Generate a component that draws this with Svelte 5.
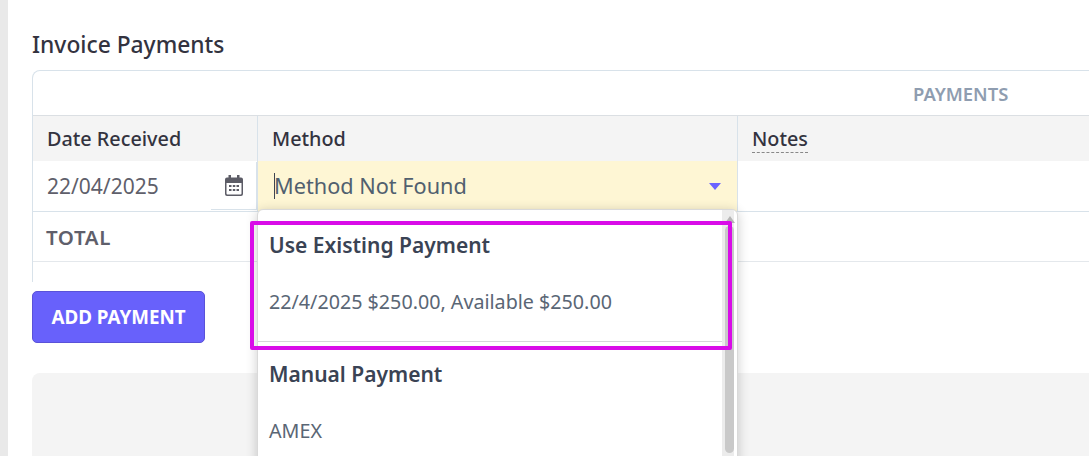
<script>
  let rows = [
    { title: "Use Existing Payment", items: ["22/4/2025 $250.00, Available $250.00"] },
    { title: "Manual Payment", items: ["AMEX"] }
  ];
</script>

<div class="page">
  <div class="rail"></div>
  <main class="content">
    <h2 class="title">Invoice Payments</h2>

    <section class="table_card">
      <div class="group_row">PAYMENTS</div>

      <div class="row head">
        <div class="cell date">Date Received</div>
        <div class="cell method">Method</div>
        <div class="cell notes"><span class="dashed">Notes</span></div>
      </div>

      <div class="row entry">
        <div class="cell date date_input">
          <span>22/04/2025</span>
          <div class="cal_addon">
            <svg width="18" height="21" viewBox="0 0 18 21">
              <path fill="#5c5c66" d="M3.500 0h2.500v2.500h6V0h2.500v2.500H16a2 2 0 0 1 2 2V19a2 2 0 0 1-2 2H2a2 2 0 0 1-2-2V4.500a2 2 0 0 1 2-2h1.500zM1.500 8v10.500a1 1 0 0 0 1 1h13a1 1 0 0 0 1-1V8z"/>
              <path fill="#5c5c66" d="M4 10h2.500v2H4zM7.800 10h2.500v2H7.800zM11.500 10H14v2h-2.500zM4 14h2.500v2H4zM7.800 14h2.500v2H7.800zM11.500 14H14v2h-2.500z"/>
            </svg>
          </div>
        </div>
        <div class="cell method select">
          <span class="caret"></span>
          <span class="select_value">Method Not Found</span>
          <span class="arrow"></span>
        </div>
        <div class="cell notes"></div>
      </div>

      <div class="row total">
        <div class="cell date total_label">TOTAL</div>
      </div>
      <div class="tail"></div>
    </section>

    <button class="add_btn">ADD PAYMENT</button>

    <div class="grey_panel"></div>
  </main>

  <div class="dropdown">
    <div class="menu_list">
      {#each rows as group, i}
        <div class="group {i === 0 ? 'first' : ''}">
          <div class="group_title">{group.title}</div>
          {#each group.items as item}
            <div class="option">{item}</div>
          {/each}
        </div>
      {/each}
    </div>
    <div class="scroll_track">
      <div class="scroll_up"></div>
      <div class="scroll_thumb"></div>
    </div>
  </div>

  <div class="highlight"></div>
</div>

<style>
  :global(body) {
    margin: 0;
    background: #fff;
  }

  .page {
    position: relative;
    display: flex;
    width: 1089px;
    height: 456px;
    overflow: hidden;
    font-family: "Noto Sans", sans-serif;
    color: #33333f;
  }

  .rail {
    width: 8px;
    flex: none;
    background: #e9e9e9;
  }

  .content {
    flex: none;
    width: 1300px;
    padding: 29px 0 0 24px;
    box-sizing: border-box;
  }

  .title {
    margin: 0;
    height: 41px;
    font-size: 22.8px;
    line-height: 31px;
    font-weight: 500;
    color: #33333f;
  }

  .table_card {
    border: 1px solid #d8e2ea;
    border-bottom: none;
    border-radius: 8px 8px 0 0;
  }

  .group_row {
    height: 44px;
    box-sizing: border-box;
    padding: 11px 0 0 880px;
    line-height: 24px;
    font-size: 18.4px;
    font-weight: 600;
    color: #8f9db0;
  }

  .row {
    display: flex;
  }

  .cell {
    box-sizing: border-box;
    flex: none;
  }

  .date { width: 224px; }
  .method { width: 480px; }
  .notes { flex: 1; }

  .head {
    height: 46px;
    box-sizing: border-box;
    background: #f4f4f4;
    border-top: 1px solid #dbdfe3;
    font-size: 19.8px;
    font-weight: 500;
    line-height: 45px;
  }

  .head .cell {
    padding-left: 14px;
  }

  .head .method {
    border-left: 1px solid #d8e2ea;
    padding-left: 14px;
  }

  .head .notes,
  .entry .notes {
    border-left: 1px solid #d8e2ea;
  }

  .dashed {
    border-bottom: 1px dashed #888;
  }

  .entry {
    height: 51px;
    box-sizing: border-box;
    border-bottom: 1px solid #d8e2ea;
    font-size: 21.7px;
    line-height: 28px;
    color: #5f5f6b;
  }

  .date_input {
    display: flex;
    align-items: center;
    justify-content: space-between;
    padding: 0 0 0 14px;
    height: 50px;
    font-size: 21px;
  }

  .cal_addon {
    width: 46px;
    height: 48px;
    margin-bottom: 1px;
    display: flex;
    align-items: center;
    justify-content: center;
    box-sizing: border-box;
    background: #fff;
    border-bottom: 1px solid #d8e2ea;
    border-right: 1px solid #d8e2ea;
  }

  .select {
    position: relative;
    display: flex;
    align-items: center;
    justify-content: space-between;
    height: 50px;
    padding: 0 16px 0 16px;
    background: #fef6d4;
    border-left: 1px solid #d8e2ea;
    color: #51606f;
  }

  .caret {
    position: absolute;
    left: 16px;
    top: 12px;
    width: 1px;
    height: 26px;
    background: #3d4452;
  }

  .arrow {
    width: 0;
    height: 0;
    border-left: 6px solid transparent;
    border-right: 6px solid transparent;
    border-top: 7px solid #6c63ff;
  }

  .total {
    height: 50px;
    box-sizing: border-box;
    border-bottom: 1px solid #e4e8ec;
  }

  .total_label {
    padding-left: 13px;
    line-height: 50px;
    font-size: 20.5px;
    font-weight: 600;
    letter-spacing: 0.6px;
    color: #5f5f6b;
  }

  .tail {
    height: 20px;
  }

  .add_btn {
    display: block;
    margin-top: 9px;
    width: 173px;
    height: 52px;
    padding: 0;
    border: 1px solid #5a52d8;
    border-radius: 5px;
    background: #6861fb;
    color: #fff;
    font-family: inherit;
    font-size: 18.8px;
    font-weight: 700;
  }

  .grey_panel {
    margin-top: 30px;
    height: 200px;
    background: #f4f4f4;
    border-radius: 8px;
  }

  .dropdown {
    position: absolute;
    left: 257px;
    top: 209px;
    width: 481px;
    height: 280px;
    display: flex;
    box-sizing: border-box;
    background: #fff;
    border: 1px solid #d9d9d9;
    border-radius: 6px;
    box-shadow: 0 2px 12px rgba(0, 0, 0, 0.2);
  }

  .menu_list {
    flex: 1;
  }

  .group {
    padding: 17px 11px 0 11px;
  }

  .group.first {
    padding-top: 20px;
    height: 132px;
    box-sizing: border-box;
    border-bottom: 1px solid #d5d5d8;
  }

  .group_title {
    height: 30px;
    font-size: 21px;
    line-height: 30px;
    font-weight: 600;
    color: #3a4354;
  }

  .option {
    margin-top: 27px;
    font-size: 19.7px;
    line-height: 30px;
    color: #5a6675;
  }

  .scroll_track {
    position: relative;
    width: 12px;
    margin-right: 3px;
    background: #ececec;
  }

  .scroll_up {
    margin: 6px 0 0 3px;
    width: 0;
    height: 0;
    border-left: 5px solid transparent;
    border-right: 5px solid transparent;
    border-bottom: 7px solid #b5b5b5;
  }

  .scroll_thumb {
    position: absolute;
    left: 3px;
    top: 16px;
    width: 9px;
    height: 227px;
    border-radius: 5px;
    background: #c9c9c9;
  }

  .highlight {
    position: absolute;
    left: 250px;
    top: 221px;
    width: 482px;
    height: 129px;
    box-sizing: border-box;
    border: 4px solid #d90ce8;
    border-radius: 2px;
  }
</style>
